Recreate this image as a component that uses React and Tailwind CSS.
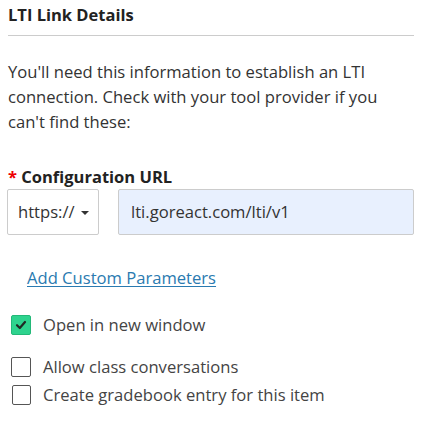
export default function App() {
  return (
    <div className="w-[427px] h-[421px] bg-white text-[#333] font-['Open_Sans',sans-serif] overflow-hidden">
      <div className="pl-2 pr-[13px] pt-[5px]">
        <h3 className="text-[16.5px] font-bold leading-5 text-[#222]">LTI Link Details</h3>
        <div className="mt-[10px] border-t border-[#cccccc]" />

        <p className="mt-[23px] text-[16.6px] leading-[25px] text-[#333]">
          You'll need this information to establish an LTI connection. Check with your tool provider if you can't find these:
        </p>

        <div className="mt-[33px] text-[16.5px] font-bold leading-5 text-[#222]">
          <span className="text-[#e00]">*</span> Configuration URL
        </div>

        <div className="mt-[2px] flex items-stretch gap-[19px] -ml-px">
          <div className="w-[92px] h-[46px] flex items-center pl-[10px] gap-[6px] border border-[#cccccc] rounded-[2px] text-[16.6px] text-[#333]">
            https://
            <span className="mt-[2px] w-0 h-0 border-l-[4px] border-r-[4px] border-t-[4px] border-l-transparent border-r-transparent border-t-[#333]" />
          </div>
          <div className="flex-1 h-[46px] flex items-center pl-[12px] border border-[#cccccc] rounded-[2px] bg-[#e8f0fe] text-[16.6px] text-[#333]">
            lti.goreact.com/lti/v1
          </div>
        </div>

        <div className="mt-[31px] pl-[19px]">
          <a href="#" className="text-[16.6px] leading-6 text-[#2a7ab0] underline underline-offset-2">Add Custom Parameters</a>
        </div>

        <div className="mt-[23px] pl-[3px] flex flex-col text-[#444]">
          <label className="flex items-center gap-[12px] h-[24px] text-[16.6px]">
            <span className="w-[20px] h-[20px] rounded-[2px] bg-[#2ed38e] border border-[#23b878] flex items-center justify-center">
              <svg width="12" height="12" viewBox="0 0 12 12"><path d="M2 6.2 L4.8 9 L10 3" fill="none" stroke="#1f2a24" strokeWidth="2.2" strokeLinecap="round" strokeLinejoin="round" /></svg>
            </span>
            Open in new window
          </label>
          <label className="mt-[18px] flex items-center gap-[12px] h-[24px] text-[16.6px]">
            <span className="w-[20px] h-[20px] rounded-[2px] border border-[#555] bg-white" />
            Allow class conversations
          </label>
          <label className="mt-[4px] flex items-center gap-[12px] h-[24px] text-[16.6px] pl-px">
            <span className="w-[19px] h-[20px] rounded-[2px] border border-[#555] bg-white" />
            Create gradebook entry for this item
          </label>
        </div>
      </div>
    </div>
  );
}
